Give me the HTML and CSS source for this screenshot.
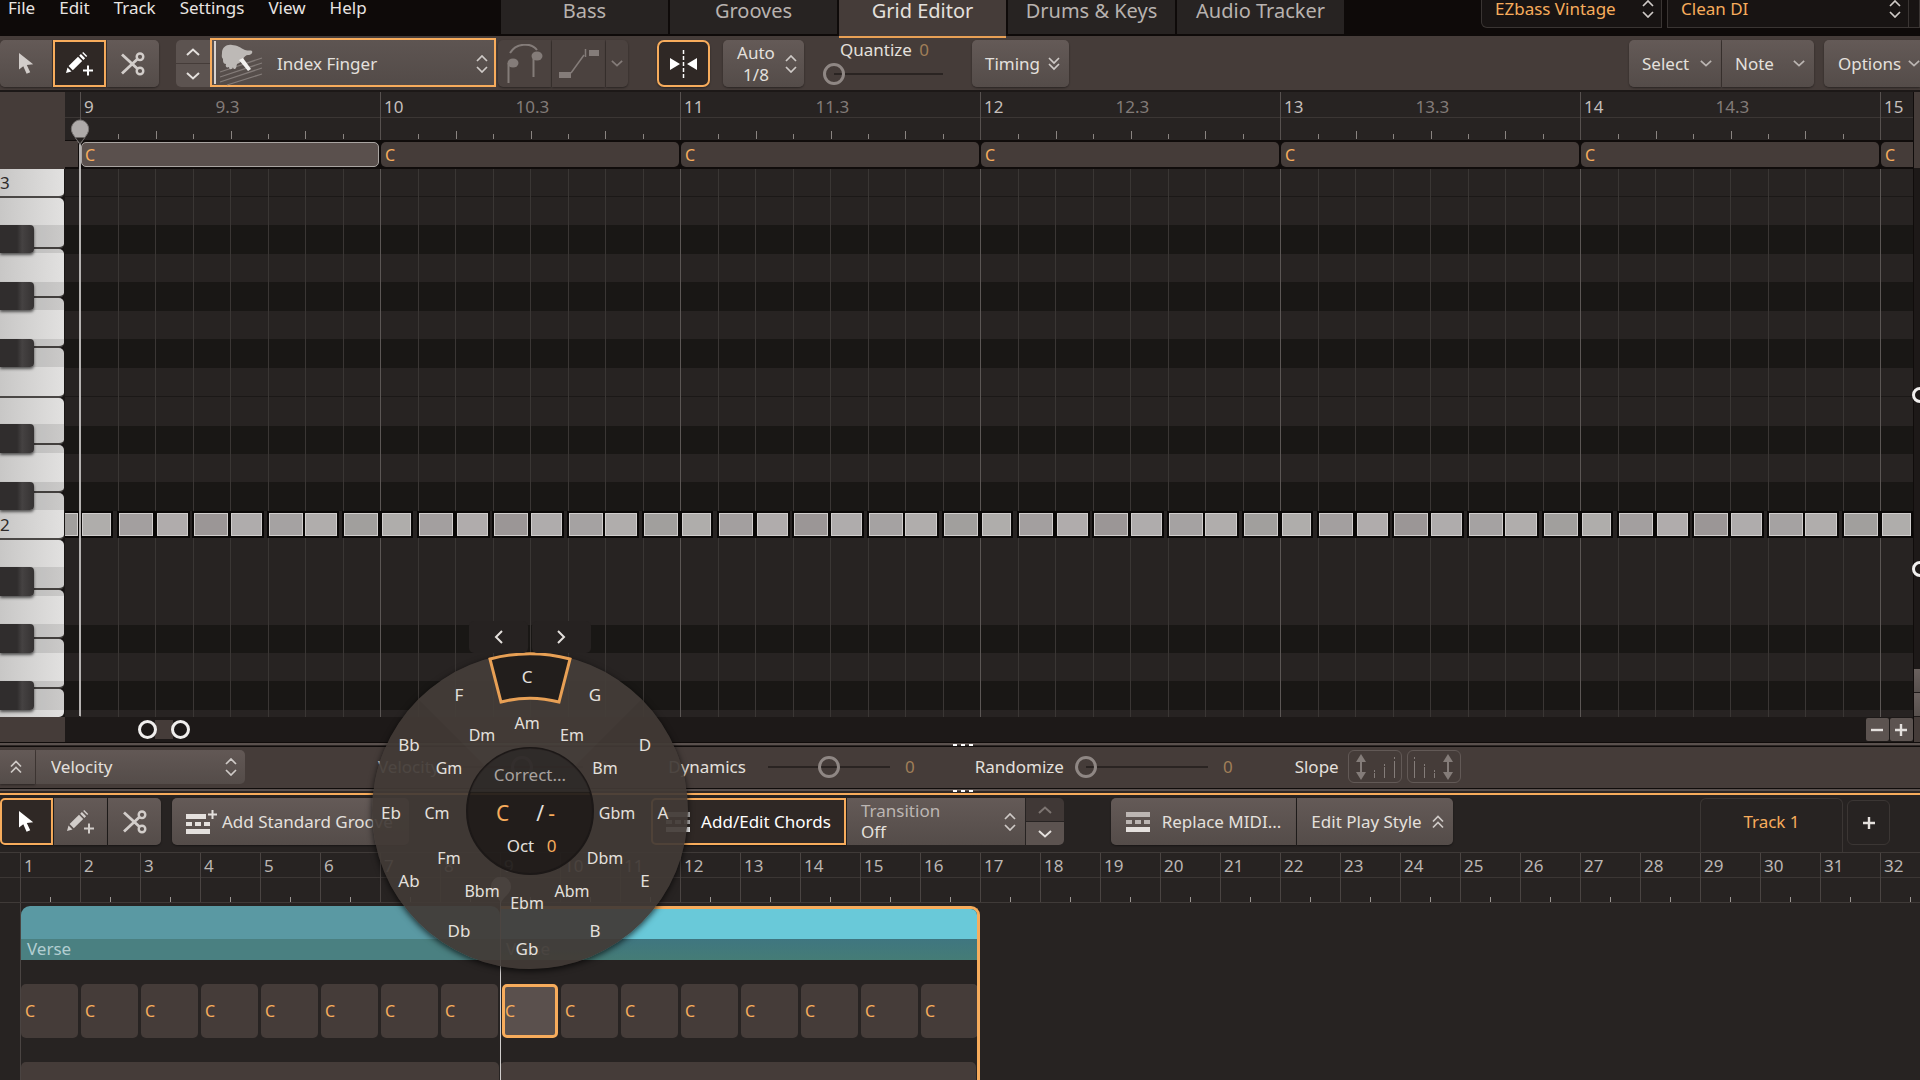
FILE: index.html
```html
<!DOCTYPE html>
<html lang="en">
<head>
    <meta charset="UTF-8">
    <title>EZbass - Grid Editor</title>
    <link rel="stylesheet" href="styles.css">
</head>
<body>
    <svg class="sprite" aria-hidden="true">
        <symbol id="i-pointer" viewBox="0 0 15 21">
            <path fill="currentColor" d="M0 0v16.500l4.300-3.300 3.300 7.600 3.600-1.600-3.400-7.300 6.400-.7z"/>
        </symbol>
        <symbol id="i-pencil" viewBox="0 0 28 24">
            <path fill="currentColor" d="M0 21l1.500-5.500 4 4zM2.600 14l9.400-9.200 4.200 4.200-9.400 9.200zM13.200 3.700l1.700-1.700 4.200 4.200-1.700 1.700zM16.200 1l1-1 4 4-1 1z"/>
            <path stroke="currentColor" stroke-width="2" d="M22 13.500v10M17 18.500h10"/>
        </symbol>
        <symbol id="i-scissors" viewBox="0 0 24 24">
            <g fill="none" stroke="currentColor">
                <circle cx="19" cy="4.800" r="3.300" stroke-width="2.400"/>
                <circle cx="19" cy="19" r="3.300" stroke-width="2.400"/>
                <path stroke-width="2.800" d="M1 2.500L16.500 16.800M1 21.500L16.500 7"/>
            </g>
        </symbol>
        <symbol id="i-up" viewBox="0 0 14 8"><path fill="none" stroke="currentColor" stroke-width="2" d="M1 7l6-5.500L13 7"/></symbol>
        <symbol id="i-down" viewBox="0 0 14 8"><path fill="none" stroke="currentColor" stroke-width="2" d="M1 1l6 5.500L13 1"/></symbol>
        <symbol id="i-updown" viewBox="0 0 12 18"><path fill="none" stroke="currentColor" stroke-width="1.700" d="M1 6l5-5 5 5M1 12l5 5 5-5"/></symbol>
        <symbol id="i-dbldown" viewBox="0 0 12 14"><path fill="none" stroke="currentColor" stroke-width="1.700" d="M1 1l5 5 5-5M1 7l5 5 5-5"/></symbol>
        <symbol id="i-dblup" viewBox="0 0 12 14"><path fill="none" stroke="currentColor" stroke-width="1.700" d="M1 6.500l5-5 5 5M1 12.500l5-5 5 5"/></symbol>
        <symbol id="i-prev" viewBox="0 0 9 14"><path fill="none" stroke="currentColor" stroke-width="2" d="M8 1L2 7l6 6"/></symbol>
        <symbol id="i-next" viewBox="0 0 9 14"><path fill="none" stroke="currentColor" stroke-width="2" d="M1 1l6 6-6 6"/></symbol>
        <symbol id="i-plus" viewBox="0 0 14 14"><path stroke="currentColor" stroke-width="2.400" d="M7 1v12M1 7h12"/></symbol>
        <symbol id="i-minus" viewBox="0 0 14 14"><path stroke="currentColor" stroke-width="2.400" d="M1 7h12"/></symbol>
        <symbol id="i-groove" viewBox="0 0 24 20">
            <path fill="currentColor" opacity=".7" d="M0 0h24v5H0zM0 8h6v4H0zM9 8h6v4H9zM18 8h6v4h-6z"/>
            <path fill="currentColor" d="M0 15h24v5H0z"/>
        </symbol>
        <symbol id="i-groove-add" viewBox="0 0 31 24">
            <path fill="currentColor" d="M0 4h20v5H0zM0 12h6v4H0zM9 12h6v4H9zM18 12h6v4h-6zM0 19h24v5H0z"/>
            <path stroke="currentColor" stroke-width="2" d="M26.500 0v9M22 4.500h9"/>
        </symbol>
        <symbol id="i-slope" viewBox="0 0 40 26">
            <path stroke="currentColor" stroke-width="2" d="M6 5v16"/>
            <path fill="currentColor" d="M6 0l5 8H1zM6 26l5-8H1z"/>
            <path stroke="currentColor" stroke-width="1" d="M19.500 19v5M29.500 13v11M39.500 7v17M19.500 16v2M29.500 10v2M39.500 3v2"/>
        </symbol>
    </svg>

    <header class="topbar">
        <nav class="menu">
            <a href="#">File</a>
            <a href="#">Edit</a>
            <a href="#">Track</a>
            <a href="#">Settings</a>
            <a href="#">View</a>
            <a href="#">Help</a>
        </nav>
        <nav class="tabs">
            <button class="tab">Bass</button>
            <button class="tab">Grooves</button>
            <button class="tab active">Grid Editor</button>
            <button class="tab">Drums &amp; Keys</button>
            <button class="tab">Audio Tracker</button>
        </nav>
        <div class="presets">
            <div class="preset preset-lib">
                <select aria-label="Library"><option>EZbass Vintage</option></select>
                <svg class="ic-updown"><use href="#i-updown"/></svg>
            </div>
            <div class="preset preset-sound">
                <select aria-label="Sound"><option>Clean DI</option></select>
                <svg class="ic-updown"><use href="#i-updown"/></svg>
            </div>
            <div class="preset preset-more"></div>
        </div>
    </header>

    <div class="toolbar">
        <div class="group tools">
            <button class="btn" aria-label="Select tool"><svg class="ic-pointer"><use href="#i-pointer"/></svg></button>
            <button class="btn on" aria-label="Pencil tool"><svg class="ic-pencil"><use href="#i-pencil"/></svg></button>
            <button class="btn" aria-label="Split tool"><svg class="ic-scissors"><use href="#i-scissors"/></svg></button>
        </div>
        <div class="stepper">
            <button aria-label="Previous articulation"><svg class="ic-chev"><use href="#i-up"/></svg></button>
            <button aria-label="Next articulation"><svg class="ic-chev"><use href="#i-down"/></svg></button>
        </div>
        <div class="finger">
            <svg class="ic-hand" viewBox="0 0 44 42">
                <path stroke="#837b78" stroke-width="1.300" d="M1 28l42-14M1 33l42-14M1 38l42-14M8 41l35-11"/>
                <path fill="#bdb9b6" d="M3 9C3 3 8 0 13 1c5 0 9 3 13 5 3 1 6 0 7 1 1 2-1 4-4 4-2 0-4 2-5 4-1 3-4 4-6 5l-1 4c-1 2-3 1-3-1-1 3-4 3-4 0-2 1-4 0-3-3-3 0-3-3-3-5-2-2-1-4-1-6z"/>
                <path fill="#f4f2f0" d="M20 16l4-2 8 11-3 2z"/>
            </svg>
            <select aria-label="Articulation"><option>Index Finger</option></select>
            <svg class="ic-updown"><use href="#i-updown"/></svg>
        </div>
        <div class="group faded">
            <button class="btn" aria-label="Legato" disabled>
                <svg class="ic-slur" viewBox="0 0 36 40">
                    <path fill="none" stroke="currentColor" stroke-width="2" d="M3 9C9-1 24-2 30 6M1.500 39V19M26.500 33V10"/>
                    <ellipse cx="6" cy="19" rx="5.500" ry="4.500" fill="currentColor"/>
                    <ellipse cx="30" cy="12" rx="5.500" ry="4.500" fill="currentColor"/>
                </svg>
            </button>
            <button class="btn" aria-label="Slide" disabled>
                <svg class="ic-slide" viewBox="0 0 40 30">
                    <path fill="currentColor" d="M0 23h12v6H0zM30 1h10v6H30z"/>
                    <path fill="none" stroke="currentColor" stroke-width="1.500" d="M12 24L25 6M26.500 0v8"/>
                </svg>
            </button>
            <button class="btn slim" aria-label="More articulations" disabled><svg class="ic-small"><use href="#i-down"/></svg></button>
        </div>
        <button class="btn on snap" aria-label="Snap">
            <svg class="ic-snap" viewBox="0 0 27 28">
                <path fill="currentColor" d="M0 8v12l10-6zM27 8v12l-10-6z"/>
                <path stroke="currentColor" stroke-width="1.500" stroke-dasharray="4 2" d="M13.500 0v28"/>
            </svg>
        </button>
        <button class="btn auto"><span>Auto<br>1/8</span><svg class="ic-updown"><use href="#i-updown"/></svg></button>
        <div class="quantize">
            <label for="quantize">Quantize <output class="amber-dim">0</output></label>
            <input class="slider" type="range" id="quantize" min="0" max="100" value="0">
        </div>
        <button class="btn timing">Timing<svg class="ic-dbl"><use href="#i-dbldown"/></svg></button>
        <div class="group menus">
            <button class="btn">Select<svg class="ic-small"><use href="#i-down"/></svg></button>
            <button class="btn">Note<svg class="ic-small"><use href="#i-down"/></svg></button>
        </div>
        <button class="btn options">Options<svg class="ic-small"><use href="#i-down"/></svg></button>
    </div>

    <main class="editor">
        <div class="keys-col">
            <div class="keys-head"></div>
            <div class="keyboard">
                <div class="whites" id="whites"></div>
                <div class="rows" id="blacks"></div>
            </div>
            <div class="keys-foot"></div>
        </div>
        <div class="timeline">
            <div class="ruler" id="ruler"></div>
            <div class="chord-lane" id="chordLane"></div>
            <div class="grid">
                <div class="rows" id="rows"></div>
                <div class="cols" id="cols"></div>
            </div>
            <div class="hscroll">
                <div class="hthumb"><span class="ring"></span><span class="ring"></span></div>
                <div class="zoom">
                    <button aria-label="Zoom out"><svg class="ic-zoom"><use href="#i-minus"/></svg></button>
                    <button aria-label="Zoom in"><svg class="ic-zoom"><use href="#i-plus"/></svg></button>
                </div>
            </div>
            <div class="playhead">
                <svg viewBox="0 0 20 26">
                    <path fill="#aeaaa9" stroke="#787473" d="M10 25.500L2.500 14.500C-1 8 4 1 10 1s11 7 7.500 13.500z"/>
                    <path fill="#262221" d="M5.500 18.500h9L10 24.500z"/>
                </svg>
            </div>
        </div>
        <div class="vscroll">
            <span class="ring"></span>
            <span class="ring"></span>
            <button aria-label="Vertical zoom in"></button>
            <button aria-label="Vertical zoom out"></button>
            <div class="vfoot"></div>
        </div>
    </main>

    <div class="splitter"><i></i><i></i><i></i></div>

    <section class="velocity">
        <button class="btn expand" aria-label="Expand"><svg class="ic-dbl"><use href="#i-dblup"/></svg></button>
        <div class="vel-select">
            <select aria-label="Property"><option>Velocity</option></select>
            <svg class="ic-updown"><use href="#i-updown"/></svg>
        </div>
        <div class="param first">
            <label for="vel">Velocity</label>
            <input class="slider" type="range" id="vel" value="50">
            <output>0</output>
        </div>
        <div class="param">
            <label for="dyn">Dynamics</label>
            <input class="slider" type="range" id="dyn" value="50">
            <output>0</output>
        </div>
        <div class="param">
            <label for="rnd">Randomize</label>
            <input class="slider" type="range" id="rnd" value="0">
            <output>0</output>
        </div>
        <div class="slope">
            <span>Slope</span>
            <button aria-label="Slope start"><svg class="ic-slope"><use href="#i-slope"/></svg></button>
            <button aria-label="Slope end"><svg class="ic-slope flip"><use href="#i-slope"/></svg></button>
        </div>
    </section>

    <div class="splitter amber"><i></i><i></i><i></i></div>

    <div class="songbar">
        <div class="group tools">
            <button class="btn on" aria-label="Select tool"><svg class="ic-pointer"><use href="#i-pointer"/></svg></button>
            <button class="btn" aria-label="Pencil tool"><svg class="ic-pencil"><use href="#i-pencil"/></svg></button>
            <button class="btn" aria-label="Split tool"><svg class="ic-scissors"><use href="#i-scissors"/></svg></button>
        </div>
        <button class="btn add-groove"><svg class="ic-groove-add"><use href="#i-groove-add"/></svg>Add Standard Groove</button>
        <div class="group chords">
            <button class="btn on edit-chords"><svg class="ic-groove"><use href="#i-groove"/></svg>Add/Edit Chords</button>
            <div class="transition">
                <label for="transition">Transition</label>
                <select id="transition"><option>Off</option></select>
                <svg class="ic-updown"><use href="#i-updown"/></svg>
            </div>
            <div class="stepper">
                <button aria-label="Previous transition" disabled><svg class="ic-chev"><use href="#i-up"/></svg></button>
                <button aria-label="Next transition"><svg class="ic-chev"><use href="#i-down"/></svg></button>
            </div>
        </div>
        <div class="group midi">
            <button class="btn replace"><svg class="ic-groove"><use href="#i-groove"/></svg>Replace MIDI...</button>
            <button class="btn style">Edit Play Style<svg class="ic-dbl"><use href="#i-dblup"/></svg></button>
        </div>
        <button class="track-tab">Track 1</button>
        <button class="track-add" aria-label="Add track"><svg class="ic-zoom"><use href="#i-plus"/></svg></button>
    </div>

    <section class="song">
        <div class="song-ruler" id="songRuler"></div>
        <div class="parts">
            <div class="part">
                <div class="clip"><div class="clip-name">Verse</div></div>
                <div class="chord-row" id="chordsA"></div>
                <div class="midi-clip"></div>
            </div>
            <div class="part selected">
                <div class="clip"><div class="clip-name">Verse</div></div>
                <div class="chord-row" id="chordsB"></div>
                <div class="midi-clip"></div>
            </div>
        </div>
        <div class="song-playhead">
            <svg viewBox="0 0 20 26"><path fill="#aeaaa9" d="M10 26C8 20 0 17 0 9.500a10 10 0 0 1 20 0C20 17 12 20 10 26z"/></svg>
        </div>
    </section>

    <div class="wheel" id="wheel">
        <div class="wheel-nav">
            <button aria-label="Previous chord"><svg class="ic-side"><use href="#i-prev"/></svg></button>
            <button aria-label="Next chord"><svg class="ic-side"><use href="#i-next"/></svg></button>
        </div>
        <svg class="wheel-bg" viewBox="-158 -158 316 316">
            <path class="ring-fill" fill-rule="evenodd" d="M-158 0a158 158 0 1 0 316 0a158 158 0 1 0-316 0zM-63 0a63 63 0 1 0 126 0a63 63 0 1 0-126 0z"/>
            <path class="ring-lit" d="M-112-112A158 158 0 0 1 112-112L45-45A63 63 0 0 0-45-45z"/>
            <circle class="hub" r="63"/>
            <path class="hub-top" d="M-60-19A63 63 0 0 1 60-19z"/>
            <path class="picked" d="M-40-152A158 158 0 0 1 40-152L29-109A113 113 0 0 0-29-109z"/>
        </svg>
        <div class="hub-text">
            <button class="correct">Correct...</button>
            <div class="chord-name"><b>C</b><span>/<em>-</em></span></div>
            <div class="oct">Oct <em>0</em></div>
        </div>
    </div>

    <script src="script.js"></script>
</body>
</html>
```

FILE: styles.css
```css
* {
    box-sizing: border-box;
}
body {
    margin: 0;
    min-height: 100vh;
    display: flex;
    flex-direction: column;
    position: relative;
    overflow: hidden;
    background: #272322;
    color: #e4e0dd;
    font: 17px/20px "Noto Sans", "Open Sans", sans-serif;
}
button, select, input {
    font: inherit;
    color: inherit;
    margin: 0;
    padding: 0;
    border: 0;
    background: none;
}
select {
    appearance: none;
    cursor: pointer;
}
svg {
    display: block;
    flex: none;
}
em, b {
    font-style: normal;
    font-weight: normal;
    color: #f7ac5c;
}
.sprite {
    position: absolute;
    width: 0;
    height: 0;
}

/* icons */
.ic-pointer { width: 15px; height: 21px; }
.ic-pencil { width: 28px; height: 24px; }
.ic-scissors { width: 24px; height: 24px; }
.ic-chev { width: 14px; height: 8px; }
.ic-small { width: 12px; height: 7px; color: #bbb5b2; }
.ic-updown { width: 12px; height: 18px; color: #cfcac7; }
.ic-dbl { width: 12px; height: 14px; color: #cfcac7; }
.ic-side { width: 9px; height: 14px; }
.ic-zoom { width: 14px; height: 14px; }
.ic-groove { width: 24px; height: 20px; }
.ic-groove-add { width: 31px; height: 24px; }
.ic-slur { width: 36px; height: 40px; }
.ic-slide { width: 40px; height: 30px; }
.ic-snap { width: 27px; height: 28px; }
.ic-slope { width: 40px; height: 26px; }
.flip { transform: scaleX(-1); }

/* top bar */
.topbar {
    display: flex;
    height: 36px;
    background: #0e0a09;
}
.menu {
    display: flex;
    gap: 24px;
    width: 501px;
    padding: 0 8px;
    line-height: 16px;
}
.menu a {
    color: #e8e4e2;
    text-decoration: none;
}
.tabs {
    display: flex;
    gap: 2px;
}
.tab {
    width: 167px;
    height: 34px;
    padding-bottom: 12px;
    background: #272322;
    color: #b8b2af;
    font-size: 20px;
}
.tab.active {
    height: 38px;
    padding-bottom: 14px;
    background: #453c39;
    border-bottom: 2px solid #e8a055;
    color: #e4e0dd;
    z-index: 1;
}
.presets {
    display: flex;
    gap: 5px;
    margin-left: auto;
    height: 28px;
}
.preset {
    position: relative;
    border: 1px solid #3a3533;
    border-top: 0;
    background: #181413;
    color: #f7ac5c;
}
.preset select {
    display: block;
    width: 100%;
    height: 20px;
    margin-top: -1px;
    padding: 0 13px;
    line-height: 20px;
}
.preset .ic-updown {
    position: absolute;
    right: 7px;
    top: 0;
}
.preset-lib { width: 181px; border-bottom-left-radius: 6px; }
.preset-sound { width: 242px; }
.preset-more { width: 12px; margin-left: -6px; }

/* toolbars */
.toolbar {
    display: flex;
    align-items: center;
    height: 56px;
    padding-top: 1px;
    background: #453c39;
    border-bottom: 2px solid #1c1817;
}
.btn {
    display: flex;
    align-items: center;
    justify-content: center;
    height: 47px;
    background: linear-gradient(#645a57, #544c49);
    border-radius: 5px;
    box-shadow: 0 1px 2px rgba(0, 0, 0, .4);
    white-space: nowrap;
}
.group {
    display: flex;
    gap: 1px;
}
.group > * {
    border-radius: 0;
}
.group > :first-child {
    border-radius: 5px 0 0 5px;
}
.group > :last-child {
    border-radius: 0 5px 5px 0;
}
.tools .btn {
    width: 53px;
    color: #d2cdca;
}
.btn.on,
.tools .btn.on {
    background: #2f2825;
    border: 2px solid #f7ac5c;
    color: #fff;
}
.toolbar .tools .btn {
    width: 52px;
}
.toolbar .tools .btn.on {
    width: 53px;
}
.stepper {
    display: flex;
    flex-direction: column;
    gap: 1px;
    width: 38px;
    height: 47px;
    overflow: hidden;
}
.stepper button {
    flex: 1;
    display: flex;
    align-items: center;
    justify-content: center;
    background: #5c5350;
}
.stepper button:disabled {
    background: #403836;
    color: #7d7572;
}
.toolbar .stepper {
    width: 34px;
    margin-left: 17px;
    border-radius: 5px 0 0 5px;
}
.finger {
    position: relative;
    width: 286px;
    height: 49px;
    margin-top: -2px;
    border: 2px solid #f7ac5c;
    background: linear-gradient(#5e5552, #534b48);
}
.finger::before {
    content: "";
    position: absolute;
    left: 2px;
    top: 1px;
    bottom: 1px;
    width: 2px;
    background: #d8d3d0;
}
.finger select {
    width: 100%;
    height: 46px;
    padding: 1px 0 0 65px;
}
.finger .ic-updown {
    position: absolute;
    right: 6px;
    top: 15px;
}
.ic-hand {
    position: absolute;
    left: 7px;
    top: 4px;
    width: 44px;
    height: 42px;
}
.faded {
    margin-left: 2px;
}
.faded .btn {
    width: 53px;
    background: #4b423f;
    color: #847c79;
}
.faded .btn.slim {
    width: 22px;
}
.faded .ic-small {
    color: #847c79;
}
.btn.snap {
    width: 53px;
    margin-left: 29px;
    border-radius: 7px;
}
.auto {
    gap: 10px;
    width: 81px;
    margin-left: 13px;
    padding-left: 7px;
    line-height: 22px;
}
.quantize {
    display: flex;
    flex-direction: column;
    margin-left: 19px;
    width: 131px;
    height: 47px;
}
.quantize label {
    padding-left: 17px;
    line-height: 19px;
    white-space: nowrap;
}
.amber-dim,
.param output {
    color: #a07f58;
}
.quantize output {
    margin-left: 3px;
}
.slider {
    appearance: none;
    width: 144px;
    height: 24px;
    background: none;
}
.quantize .slider {
    width: 131px;
    margin-top: 3px;
}
.slider::-webkit-slider-runnable-track {
    height: 22px;
    background: linear-gradient(#2a2422, #2a2422) center / calc(100% - 22px) 2px no-repeat;
}
.slider::-webkit-slider-thumb {
    appearance: none;
    width: 22px;
    height: 22px;
    border: 3px solid #8f8784;
    border-radius: 50%;
}
.timing {
    gap: 8px;
    width: 97px;
    margin-left: 18px;
    padding-left: 4px;
}
.menus {
    margin-left: auto;
}
.menus .btn {
    width: 92px;
    justify-content: space-between;
    padding: 0 9px 0 13px;
}
.options {
    width: 96px;
    margin-left: 10px;
    justify-content: space-between;
    padding-left: 14px;
    border-radius: 5px 0 0 5px;
}

/* note editor */
.editor {
    display: flex;
}
.keys-col {
    width: 65px;
    background: #453c39;
}
.keys-head {
    height: 77px;
}
.keys-foot {
    height: 25px;
}
.keyboard {
    position: relative;
    height: 548px;
    background: #1a1716;
}
.whites {
    display: flex;
    flex-direction: column;
    height: 100%;
}
.white {
    width: 64px;
    border-bottom: 2px solid #4a4745;
    border-radius: 0 5px 5px 0;
    background: linear-gradient(90deg, #c8c7c6, #e2e1e0);
    color: #2e2a29;
    display: flex;
    align-items: flex-end;
    padding-bottom: 3px;
}
.white:first-child {
    border-top-right-radius: 0;
}
.rows {
    position: absolute;
    inset: 0;
    display: flex;
    flex-direction: column;
}
.row {
    position: relative;
    flex: 40;
    background: #272322;
}
.row:first-child {
    flex: 38;
}
.row.cut {
    flex: 10;
}
.row.dark {
    background: #191715;
}
.row.edge {
    border-bottom: 1px solid #1b1817;
}
.keyboard .row {
    background: none;
    border: 0;
}
.keyboard .row.black {
    margin-right: 1px;
    background: rgba(0, 0, 0, .1);
}
.keyboard .row.black::before {
    content: "";
    position: absolute;
    left: 0;
    top: 0;
    width: 34px;
    height: 100%;
    border-radius: 0 4px 4px 0;
    background: linear-gradient(90deg, #302d2d 50%, #454242 65%, #353232);
    box-shadow: 0 2px 3px rgba(0, 0, 0, .6);
}
.timeline {
    position: relative;
    flex: 1;
    min-width: 0;
    overflow: hidden;
    background: #272322;
}
.ruler,
.chord-lane,
.cols {
    display: flex;
    padding-left: 15px;
    overflow: hidden;
}
.bar {
    flex: none;
    position: relative;
    display: flex;
    width: 300px;
}
.ruler .bar {
    height: 48px;
    align-items: flex-end;
    border-left: 1px solid #57514f;
}
.ruler::before {
    content: "";
    position: absolute;
    left: 0;
    right: 0;
    top: 25px;
    height: 1px;
    background: #3b3634;
}
.bar-no,
.beat-no {
    position: absolute;
    top: 5px;
    left: 3px;
    color: #c4bfbc;
}
.beat-no {
    left: 50%;
    margin-left: -15px;
    color: #827b78;
}
.tick {
    flex: 1;
    height: 5px;
    margin-bottom: 1px;
    border-left: 1px solid #8a8481;
}
.tick:nth-of-type(odd) {
    height: 8px;
}
.tick:first-of-type {
    border-color: transparent;
}
.chord-lane {
    height: 29px;
    padding-top: 1px;
    background: linear-gradient(90deg, #453c39 13px, #100c0b 13px);
    border-top: 1px solid #100c0b;
    border-bottom: 2px solid #100c0b;
}
.chord {
    flex: none;
    width: 298px;
    margin: 0 1px;
    padding-left: 4px;
    border-radius: 5px;
    background: #453c39;
    color: #f7ac5c;
    font-size: 16px;
    text-align: left;
}
.chord.current {
    background: #5a504d;
    border: 1px solid #aaa5a2;
    padding-left: 3px;
}
.grid {
    position: relative;
    height: 548px;
}
.cols {
    position: absolute;
    inset: 0;
}
.cell {
    flex: 1;
    border-left: 1px solid #3a3634;
}
.cell:first-child {
    border-color: #5b5654;
}
.note {
    position: absolute;
    z-index: 1;
    top: 0;
    bottom: 1px;
    border: 2px solid #0a0807;
    box-shadow: inset 0 0 0 1px #d0cdcc;
}
.hscroll {
    display: flex;
    align-items: center;
    height: 25px;
    padding-left: 73px;
    background: #1d1918;
}
.hthumb {
    display: flex;
    justify-content: space-between;
    width: 52px;
    background: linear-gradient(#453c39, #453c39) center / 18px 22px no-repeat;
}
.ring {
    width: 19px;
    height: 19px;
    border: 3px solid #f1efee;
    border-radius: 50%;
    background: #1d1918;
}
.zoom {
    display: flex;
    gap: 1px;
    margin-left: auto;
}
.zoom button {
    width: 23px;
    height: 23px;
    padding: 4px;
    border-radius: 2px;
    background: #5c5350;
}
.playhead {
    position: absolute;
    left: 14px;
    top: 27px;
    bottom: 26px;
    width: 2px;
    background: linear-gradient(transparent 25px, #b5b2b1 25px);
    z-index: 2;
}
.playhead svg,
.song-playhead svg {
    width: 24px;
    height: 26px;
    margin-left: -11px;
}
.vscroll {
    position: relative;
    display: flex;
    flex-direction: column;
    justify-content: flex-end;
    gap: 1px;
    width: 7px;
    border-left: 1px solid #100c0b;
    background: linear-gradient(#453c39 76px, #1d1918 76px);
}
.vscroll button {
    height: 23px;
    background: linear-gradient(#6a615e, #57504d);
}
.vfoot {
    height: 25px;
    background: #453c39;
}
.vscroll .ring {
    position: absolute;
    left: -2px;
    width: 16px;
    height: 16px;
    top: 295px;
}
.vscroll .ring + .ring {
    top: 469px;
}

/* velocity strip */
.splitter {
    display: flex;
    justify-content: center;
    gap: 4px;
    height: 5px;
    padding: 1px 0 0 6px;
    border-top: 1px solid #100c0b;
    border-bottom: 1px solid #100c0b;
    background: linear-gradient(#5a514e 2px, #2c2624 2px);
}
.splitter i {
    width: 4px;
    height: 2px;
    background: #fff;
}
.splitter.amber {
    height: 7px;
    border-bottom: 2px solid #f7ac5c;
}
.velocity {
    display: flex;
    align-items: center;
    height: 41px;
    padding-bottom: 2px;
    background: #453c39;
}
.expand {
    width: 35px;
    height: 34px;
    padding-right: 4px;
    border-radius: 0;
}
.vel-select {
    position: relative;
    width: 209px;
    height: 34px;
    margin-left: 1px;
    border-radius: 0 5px 5px 0;
    background: linear-gradient(#625855, #544c49);
}
.vel-select select {
    width: 100%;
    height: 34px;
    padding-left: 15px;
}
.vel-select .ic-updown {
    position: absolute;
    right: 8px;
    top: 8px;
}
.param {
    display: flex;
    align-items: center;
    margin-left: 60px;
}
.param label {
    margin-right: 11px;
}
.param output {
    margin-left: 4px;
}
.param.first {
    margin-left: 133px;
}
.slope {
    display: flex;
    align-items: center;
    gap: 5px;
    margin-left: 62px;
}
.slope span {
    margin-right: 4px;
}
.slope button {
    display: flex;
    align-items: center;
    justify-content: center;
    width: 54px;
    height: 33px;
    border: 1px solid #625956;
    border-radius: 6px;
    color: #847c79;
}

/* song track */
.songbar {
    display: flex;
    height: 57px;
    padding: 3px 30px 0 0;
}
.add-groove {
    gap: 5px;
    width: 237px;
    margin-left: 11px;
    padding-left: 14px;
    justify-content: flex-start;
}
.chords {
    margin-left: 242px;
}
.edit-chords {
    width: 195px;
    gap: 11px;
}
.transition {
    position: relative;
    width: 178px;
    height: 47px;
    padding: 3px 14px;
    background: linear-gradient(#645a57, #544c49);
}
.transition label {
    display: block;
    color: #bcb6b3;
}
.transition select {
    width: 100%;
    height: 22px;
}
.transition .ic-updown {
    position: absolute;
    right: 9px;
    top: 15px;
}
.midi {
    margin-left: 47px;
}
.replace {
    width: 185px;
    gap: 12px;
}
.style {
    width: 156px;
    gap: 10px;
    padding-left: 5px;
}
.track-tab {
    width: 143px;
    height: 55px;
    margin-left: auto;
    padding-bottom: 8px;
    border: 1px solid #3b3634;
    border-bottom: 0;
    border-radius: 6px 6px 0 0;
    color: #f7ac5c;
}
.track-add {
    display: flex;
    align-items: center;
    justify-content: center;
    width: 43px;
    height: 45px;
    margin: 2px 0 0 4px;
    border: 1px solid #3b3634;
    border-radius: 6px;
}
.song {
    position: relative;
    flex: 1;
    padding-left: 20px;
    border-top: 1px solid #3f3a38;
    min-height: 229px;
}
.song-ruler {
    display: flex;
    height: 50px;
    margin-left: -20px;
    padding-left: 20px;
    overflow: hidden;
    border-bottom: 1px solid #3f3a38;
    background: linear-gradient(#3b3634, #3b3634) 0 24px / 100% 1px no-repeat;
}
.measure {
    flex: none;
    width: 60px;
    padding: 3px;
    border-left: 1px solid #4a4442;
    color: #bbb6b3;
    background: linear-gradient(#9c9693, #9c9693) 29px 100% / 1px 5px no-repeat;
}
.parts {
    display: flex;
    min-height: 177px;
    height: calc(100% - 50px);
    border-left: 1px solid #4a4442;
}
.part {
    display: flex;
    flex-direction: column;
    width: 479px;
    padding-top: 3px;
}
.clip {
    flex: none;
    display: flex;
    flex-direction: column;
    justify-content: flex-end;
    height: 54px;
    border-radius: 9px 9px 0 0;
    background: #5a99a3;
    overflow: hidden;
}
.clip-name {
    height: 21px;
    padding-left: 6px;
    background: #4a8081;
    color: #b3ced1;
}
.part.selected {
    width: 480px;
    margin-top: 3px;
    padding: 0;
    border: 3px solid #f7ac5c;
    border-width: 3px 3px 0 0;
    border-radius: 0 9px 0 0;
}
.selected .clip {
    height: 51px;
    border-radius: 0 6px 0 0;
    background: #69c9d9;
}
.selected .clip-name {
    background: linear-gradient(#3f7680, #457c76);
}
.chord-row {
    display: flex;
    gap: 3px;
    margin-top: 24px;
    overflow: hidden;
}
.chord-row button {
    flex: none;
    width: 57px;
    height: 54px;
    padding-left: 4px;
    border-radius: 5px;
    background: #453c39;
    color: #f7ac5c;
    text-align: left;
    font-size: 16px;
}
.chord-row button.current {
    width: 56px;
    margin-left: 2px;
    padding-left: 0;
    border: 3px solid #f7ac5c;
    background: #5a504d;
}
.midi-clip {
    flex: 1;
    margin: 24px 1px 0 0;
    border-radius: 5px 5px 0 0;
    background: #453c39;
}
.song-playhead {
    position: absolute;
    left: 500px;
    top: 24px;
    bottom: 0;
    width: 1px;
    background: #d0cdcc;
}

/* chord wheel popup */
.wheel {
    position: absolute;
    z-index: 5;
    left: 372px;
    top: 653px;
    width: 316px;
    height: 316px;
    border-radius: 50%;
    box-shadow: 0 2px 6px rgba(0, 0, 0, .7);
}
.wheel-bg {
    width: 316px;
    height: 316px;
    overflow: visible;
}
.ring-fill { fill: rgba(66, 58, 54, .93); }
.ring-lit { fill: rgba(255, 240, 235, .015); }
.hub { fill: rgba(34, 29, 27, .95); stroke: #1c1817; stroke-width: 2; }
.hub-top { fill: rgba(255, 240, 230, .06); }
.picked { fill: #221e1c; stroke: #e8a055; stroke-width: 3; }
.wheel-nav {
    position: absolute;
    left: 97px;
    top: -32px;
    display: flex;
    gap: 4px;
}
.wheel-nav button {
    display: flex;
    align-items: center;
    justify-content: center;
    width: 59px;
    height: 32px;
    border-radius: 5px;
    background: #262221;
}
.wheel .key {
    position: absolute;
    transform: translate(-50%, -50%);
    line-height: 20px;
}
.wheel .key.minor {
    font-size: 16px;
}
.hub-text {
    position: absolute;
    left: 95px;
    top: 112px;
    width: 126px;
    text-align: center;
}
.correct {
    color: #a8a29f;
}
.chord-name {
    display: flex;
    justify-content: center;
    gap: 27px;
    margin-top: 12px;
    padding-right: 9px;
    line-height: 32px;
    font-size: 21px;
}
.chord-name em {
    margin-left: 4px;
}
.oct {
    margin-top: 7px;
    padding-left: 3px;
}
.oct em {
    margin-left: 8px;
}
```

FILE: script.js
```js
const $ = (id) => document.getElementById(id);

function add(parent, cls, text, tag) {
    const el = document.createElement(tag || "div");
    if (cls) el.className = cls;
    if (text !== undefined) el.textContent = text;
    parent.appendChild(el);
    return el;
}

// one entry per semitone, from C3 down
const rows = "C B Bb A Ab G Gb F E Eb D Db C B Bb A Ab G Gb F".split(" ");
const whiteHeights = [27, 51, 50, 50, 50, 47, 48, 47, 50, 50, 50, 28];

whiteHeights.forEach((h, i) => {
    const key = add($("whites"), "white", i === 0 ? "3" : i === 7 ? "2" : "");
    key.style.flex = h + " 0 0";
    if (i === 11) key.style.borderBottom = "0";
});

// eight notes in every bar: start, length, shade
const notes = [
    [0, 33, "#afadab"], [37, 38, "#a39f9f"], [75, 35, "#b0acac"], [112, 38, "#9b9696"],
    [149, 35, "#afacac"], [187, 38, "#a5a2a2"], [223, 36, "#b0adac"], [262, 38, "#a19f9d"]
];

rows.forEach((name, i) => {
    const black = name.length === 2;
    const cut = i === rows.length - 1 ? " cut" : "";
    add($("blacks"), "row" + (black ? " black" : "") + cut);
    const edge = i === 0 || i === 7 ? " edge" : "";
    const row = add($("rows"), "row" + (black && i !== 14 ? " dark" : "") + edge + cut);
    if (i !== 12) return;
    for (let bar = -1; bar < 7; bar++) {
        notes.forEach(([start, len, shade]) => {
            const x = 15 + bar * 300 + start;
            if (x + len < 0) return;
            const note = add(row, "note");
            note.style.left = x + "px";
            note.style.width = len + "px";
            note.style.background = shade;
        });
    }
});

for (let n = 9; n <= 15; n++) {
    const bar = add($("ruler"), "bar");
    for (let i = 0; i < 8; i++) add(bar, "tick");
    add(bar, "bar-no", n, "span");
    add(bar, "beat-no", n + ".3", "span");
    add($("chordLane"), n === 9 ? "chord current" : "chord", "C", "button");
    const col = add($("cols"), "bar");
    for (let i = 0; i < 8; i++) add(col, "cell");
}

for (let n = 1; n <= 32; n++) add($("songRuler"), "measure", n);
for (let i = 0; i < 8; i++) {
    add($("chordsA"), "", "C", "button");
    add($("chordsB"), i === 0 ? "current" : "", "C", "button");
}

const majors = "C G D A E B Gb Db Ab Eb Bb F".split(" ");
const minors = "Am Em Bm Gbm Dbm Abm Ebm Bbm Fm Cm Gm Dm".split(" ");
function placeKeys(list, radius, cls) {
    list.forEach((name, i) => {
        const a = i * Math.PI / 6;
        const key = add($("wheel"), cls, name, "button");
        key.style.left = Math.round(155 + radius * Math.sin(a)) + "px";
        key.style.top = Math.round(160 - radius * Math.cos(a)) + "px";
    });
}
placeKeys(majors, 136, "key");
placeKeys(minors, 90, "key minor");
```
